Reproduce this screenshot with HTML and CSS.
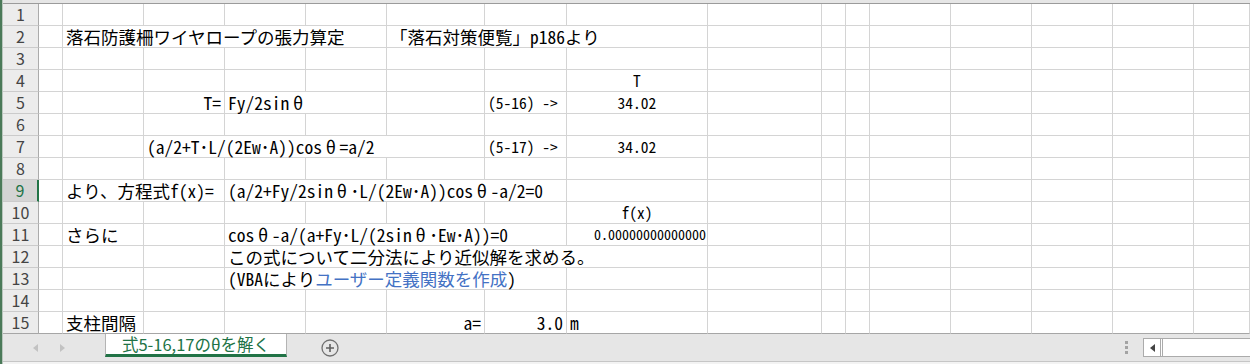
FILE: index.html
```html
<!DOCTYPE html>
<html lang="ja">
<head>
    <meta charset="UTF-8">
    <title>落石防護柵ワイヤロープの張力算定</title>
    <link rel="stylesheet" href="styles.css">
</head>
<body>
    <div class="app">
        <div class="colhead"></div>

        <div class="row">
            <div class="rh">1</div>
            <div class="c"></div><div class="c"></div><div class="c"></div><div class="c"></div><div class="c"></div><div class="c"></div><div class="c"></div><div class="c"></div>
            <div class="c"></div><div class="c"></div><div class="c"></div><div class="c"></div><div class="c"></div><div class="c"></div><div class="c"></div><div class="c"></div>
        </div>
        <div class="row">
            <div class="rh">2</div>
            <div class="c"></div>
            <div class="c s4">落石防護柵ワイヤロープの張力算定</div>
            <div class="c s3">「落石対策便覧」p186より</div>
            <div class="c"></div><div class="c"></div><div class="c"></div><div class="c"></div><div class="c"></div><div class="c"></div><div class="c"></div><div class="c"></div>
        </div>
        <div class="row">
            <div class="rh">3</div>
            <div class="c"></div><div class="c"></div><div class="c"></div><div class="c"></div><div class="c"></div><div class="c"></div><div class="c"></div><div class="c"></div>
            <div class="c"></div><div class="c"></div><div class="c"></div><div class="c"></div><div class="c"></div><div class="c"></div><div class="c"></div><div class="c"></div>
        </div>
        <div class="row">
            <div class="rh">4</div>
            <div class="c"></div><div class="c"></div><div class="c"></div><div class="c"></div><div class="c"></div><div class="c"></div><div class="c"></div>
            <div class="c g ctr">T</div>
            <div class="c"></div><div class="c"></div><div class="c"></div><div class="c"></div><div class="c"></div><div class="c"></div><div class="c"></div><div class="c"></div>
        </div>
        <div class="row">
            <div class="rh">5</div>
            <div class="c"></div><div class="c"></div>
            <div class="c r">T=</div>
            <div class="c s2">Fy/2sin<span class="th">θ</span></div>
            <div class="c"></div>
            <div class="c g">(5-16) -&gt;</div>
            <div class="c g ctr">34.02</div>
            <div class="c"></div><div class="c"></div><div class="c"></div><div class="c"></div><div class="c"></div><div class="c"></div><div class="c"></div><div class="c"></div>
        </div>
        <div class="row">
            <div class="rh">6</div>
            <div class="c"></div><div class="c"></div><div class="c"></div><div class="c"></div><div class="c"></div><div class="c"></div><div class="c"></div><div class="c"></div>
            <div class="c"></div><div class="c"></div><div class="c"></div><div class="c"></div><div class="c"></div><div class="c"></div><div class="c"></div><div class="c"></div>
        </div>
        <div class="row">
            <div class="rh">7</div>
            <div class="c"></div><div class="c"></div>
            <div class="c s4">(a/2+T･L/(2Ew･A))cos<span class="th">θ</span>=a/2</div>
            <div class="c g">(5-17) -&gt;</div>
            <div class="c g ctr">34.02</div>
            <div class="c"></div><div class="c"></div><div class="c"></div><div class="c"></div><div class="c"></div><div class="c"></div><div class="c"></div><div class="c"></div>
        </div>
        <div class="row">
            <div class="rh">8</div>
            <div class="c"></div><div class="c"></div><div class="c"></div><div class="c"></div><div class="c"></div><div class="c"></div><div class="c"></div><div class="c"></div>
            <div class="c"></div><div class="c"></div><div class="c"></div><div class="c"></div><div class="c"></div><div class="c"></div><div class="c"></div><div class="c"></div>
        </div>
        <div class="row">
            <div class="rh sel">9</div>
            <div class="c"></div>
            <div class="c s2">より、方程式f(x)=</div>
            <div class="c s4">(a/2+Fy/2sin<span class="th">θ</span>･L/(2Ew･A))cos<span class="th">θ</span>-a/2=0</div>
            <div class="c"></div>
            <div class="c"></div><div class="c"></div><div class="c"></div><div class="c"></div><div class="c"></div><div class="c"></div><div class="c"></div><div class="c"></div>
        </div>
        <div class="row">
            <div class="rh">10</div>
            <div class="c"></div><div class="c"></div><div class="c"></div><div class="c"></div><div class="c"></div><div class="c"></div><div class="c"></div>
            <div class="c g ctr">f(x)</div>
            <div class="c"></div><div class="c"></div><div class="c"></div><div class="c"></div><div class="c"></div><div class="c"></div><div class="c"></div><div class="c"></div>
        </div>
        <div class="row">
            <div class="rh">11</div>
            <div class="c"></div>
            <div class="c">さらに</div>
            <div class="c"></div>
            <div class="c s4">cos<span class="th">θ</span>-a/(a+Fy･L/(2sin<span class="th">θ</span>･Ew･A))=0</div>
            <div class="c g sm r">0.00000000000000</div>
            <div class="c"></div><div class="c"></div><div class="c"></div><div class="c"></div><div class="c"></div><div class="c"></div><div class="c"></div><div class="c"></div>
        </div>
        <div class="row">
            <div class="rh">12</div>
            <div class="c"></div><div class="c"></div><div class="c"></div>
            <div class="c s5">この式について二分法により近似解を求める。</div>
            <div class="c"></div><div class="c"></div><div class="c"></div><div class="c"></div><div class="c"></div><div class="c"></div><div class="c"></div><div class="c"></div>
        </div>
        <div class="row">
            <div class="rh">13</div>
            <div class="c"></div><div class="c"></div><div class="c"></div>
            <div class="c s4">(VBAにより<span class="link">ユーザー定義関数を作成</span>)</div>
            <div class="c"></div>
            <div class="c"></div><div class="c"></div><div class="c"></div><div class="c"></div><div class="c"></div><div class="c"></div><div class="c"></div><div class="c"></div>
        </div>
        <div class="row">
            <div class="rh">14</div>
            <div class="c"></div><div class="c"></div><div class="c"></div><div class="c"></div><div class="c"></div><div class="c"></div><div class="c"></div><div class="c"></div>
            <div class="c"></div><div class="c"></div><div class="c"></div><div class="c"></div><div class="c"></div><div class="c"></div><div class="c"></div><div class="c"></div>
        </div>
        <div class="row last">
            <div class="rh">15</div>
            <div class="c"></div>
            <div class="c">支柱間隔</div>
            <div class="c"></div><div class="c"></div><div class="c"></div>
            <div class="c r">a=</div>
            <div class="c r">3.0</div>
            <div class="c">m</div>
            <div class="c"></div><div class="c"></div><div class="c"></div><div class="c"></div><div class="c"></div><div class="c"></div><div class="c"></div><div class="c"></div>
        </div>

        <div class="tabbar">
            <div class="nav">
                <svg width="5" height="8" viewBox="0 0 5 8"><polygon points="5,0 5,8 0,4" fill="#c2c2c2"/></svg>
                <svg width="5" height="8" viewBox="0 0 5 8"><polygon points="0,0 0,8 5,4" fill="#c2c2c2"/></svg>
            </div>
            <div class="tab">式5-16,17のθを解く</div>
            <div class="add">
                <svg width="18" height="18" viewBox="0 0 18 18">
                    <circle cx="9" cy="9" r="8" fill="none" stroke="#707070" stroke-width="1.3"/>
                    <path d="M5 9h8M9 5v8" stroke="#606060" stroke-width="1.6"/>
                </svg>
            </div>
            <div class="dots"><i></i><i></i><i></i></div>
            <div class="hscroll">
                <div class="btn">
                    <svg width="5" height="8" viewBox="0 0 5 8"><polygon points="5,0 5,8 0,4" fill="#444"/></svg>
                </div>
                <div class="thumb"></div>
            </div>
        </div>
        <div class="status"></div>
    </div>
</body>
</html>
```

FILE: styles.css
```css
*{
    box-sizing: border-box;
}
body{
    margin: 0;
    width: 1250px;
    height: 364px;
    overflow: hidden;
    font-family: "Noto Sans CJK JP", "Noto Sans", sans-serif;
}
.app{
    height: 364px;
    display: flex;
    flex-direction: column;
    padding-left: 3px;
    /* 左端の緑の窓枠 */
    background: linear-gradient(to right, #4b7a59 0 2px, #b9c6bd 2px 3px, #fff 3px);
}
.colhead{
    height: 4px;
    flex: none;
    background: #e6e6e6;
    border-bottom: 1px solid #9b9b9b;
}
.row{
    display: grid;
    grid-template-columns: 36px 24px 81px 81px 81px 81px 98px 82px 141px 114px 24px 24px 81px 81px 81px 81px 1fr;
    height: 22px;
    flex: none;
}
.rh{
    background: #ececec;
    border-right: 1px solid #ababab;
    border-bottom: 1px solid #cbcbcb;
    color: #444;
    font-size: 16px;
    line-height: 21px;
    text-align: center;
}
.rh.sel{
    background: #d4d4d4;
    color: #217346;
    border-right: 2px solid #217346;
}
.c{
    border-right: 1px solid #d4d4d4;
    border-bottom: 1px solid #d4d4d4;
    padding: 0 3px;
    font-size: 17.5px;
    line-height: 21px;
    white-space: nowrap;
    color: #000;
    /* 英数字を半角幅にする */
    font-feature-settings: "hwid";
}
.last > div{
    border-bottom-color: #a6a6a6;
}
.s2{ grid-column: span 2; }
.s3{ grid-column: span 3; }
.s4{ grid-column: span 4; }
.s5{ grid-column: span 5; }
.r{ text-align: right; }
.ctr{ text-align: center; }
.g{
    font-size: 15.5px;
}
.g.sm{
    font-size: 14px;
    padding-right: 1px;
}
.th{
    display: inline-block;
    width: 1em;
    text-align: center;
}
.link{
    color: #4472c4;
}

/* シートタブ */
.tabbar{
    height: 27px;
    flex: none;
    display: flex;
    align-items: flex-start;
    background: #e6e6e6;
}
.nav{
    width: 102px;
    height: 27px;
    display: flex;
    align-items: center;
    gap: 22px;
    padding-left: 30px;
}
.tab{
    width: 182px;
    height: 23px;
    background: #fff;
    border-left: 1px solid #b4b4b4;
    border-right: 1px solid #b4b4b4;
    border-bottom: 3px solid #217346;
    color: #217346;
    font-size: 16.5px;
    line-height: 20px;
    text-align: center;
}
.add{
    margin-left: 34px;
    height: 27px;
    display: flex;
    align-items: center;
}
.dots{
    margin-left: auto;
    margin-right: 15px;
    height: 27px;
    display: flex;
    flex-direction: column;
    justify-content: center;
    gap: 2px;
}
.dots i{
    display: block;
    width: 3px;
    height: 3px;
    background: #a3a3a3;
}
.hscroll{
    width: 107px;
    height: 19px;
    margin-top: 4px;
    display: flex;
    border: 1px solid #ababab;
    border-right: 0;
    background: #fff;
}
.btn{
    width: 17px;
    border-right: 1px solid #ababab;
    display: flex;
    align-items: center;
    justify-content: center;
}
.thumb{
    flex: 1;
    margin-left: 1px;
    border-left: 1px solid #ababab;
}
.status{
    flex: 1;
    background: #f3f3f3;
    border-top: 1px solid #c6c6c6;
}
```
